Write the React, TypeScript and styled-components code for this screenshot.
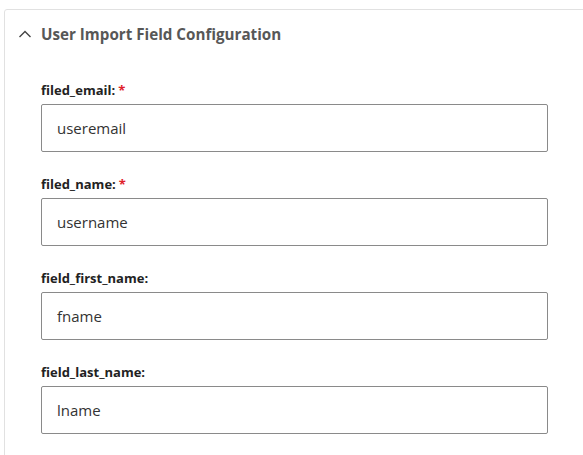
import styled, { createGlobalStyle } from "styled-components"

const GlobalStyle = createGlobalStyle`
    html, body {
        overflow: hidden;
    }
    body {
        margin: 0;
        background: #ffffff;
        font-family: "Open Sans", "Noto Sans", sans-serif;
    }
`

const Panel = styled.section`
    margin: 9px -30px 0 4px;
    min-height: 460px;
    border: 1px solid #e1e1e1;
    border-radius: 3px 0 0 0;
    box-sizing: border-box;
`

const PanelHeader = styled.div`
    display: flex;
    align-items: center;
    gap: 9px;
    height: 48px;
    padding: 0 0 0 13px;
    color: #575757;
    font-size: 15.2px;
    font-weight: 700;
`

const Chevron = styled.svg`
    width: 14px;
    height: 14px;
    flex: none;
`

const Fields = styled.div`
    display: flex;
    flex-direction: column;
    gap: 23px;
    padding: 23px 0 0 36px;
`

const Field = styled.div`
    display: flex;
    flex-direction: column;
    gap: 5px;
    width: 507px;
`

const Label = styled.label`
    font-size: 13px;
    font-weight: 700;
    color: #222222;
    line-height: 18px;
`

const Required = styled.span`
    color: #e0202a;
    margin-left: 3px;
`

const TextInput = styled.input`
    box-sizing: border-box;
    height: 48px;
    width: 100%;
    padding: 0 15px;
    border: 1px solid #8a8a8a;
    border-radius: 2px;
    font-family: inherit;
    font-size: 15px;
    color: #333333;
    background: #fff;
`

const fields = [
    { label: "filed_email:", value: "useremail", required: true },
    { label: "filed_name:", value: "username", required: true },
    { label: "field_first_name:", value: "fname", required: false },
    { label: "field_last_name:", value: "lname", required: false },
]

export default function App() {
    return (
        <>
            <GlobalStyle />
            <Panel>
                <PanelHeader>
                    <Chevron viewBox="0 0 14 14">
                        <path d="M1.5 10 L7 4.5 L12.5 10" fill="none" stroke="#444" strokeWidth="1.4" />
                    </Chevron>
                    User Import Field Configuration
                </PanelHeader>
                <Fields>
                    {fields.map((f) => (
                        <Field key={f.label}>
                            <Label>
                                {f.label}
                                {f.required && <Required>*</Required>}
                            </Label>
                            <TextInput defaultValue={f.value} />
                        </Field>
                    ))}
                </Fields>
            </Panel>
        </>
    )
}
